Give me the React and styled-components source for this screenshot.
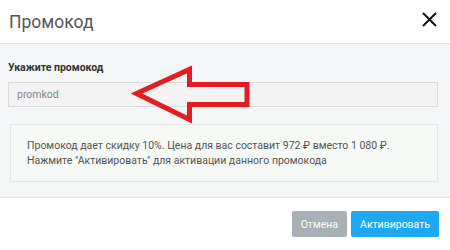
import React from 'react';
import styled, { createGlobalStyle } from 'styled-components';

const GlobalStyle = createGlobalStyle`
  body {
    margin: 0;
    font-family: Roboto, "Liberation Sans", sans-serif;
    background: #fff;
  }
`;

const App = () => {
  return (
    <>
      <GlobalStyle />
      <Modal>
        <Header>
          <Title>Промокод</Title>
          <CloseButton aria-label="close">
            <svg width="15" height="15" viewBox="0 0 15 15">
              <path d="M1 1 L14 14 M14 1 L1 14" stroke="#111" strokeWidth="2" fill="none" />
            </svg>
          </CloseButton>
        </Header>
        <Body>
          <Label>Укажите промокод</Label>
          <Input defaultValue="promkod" readOnly />
          <InfoBox>
            Промокод дает скидку 10%. Цена для вас составит 972 ₽ вместо 1 080 ₽.
            <br />
            Нажмите "Активировать" для активации данного промокода
          </InfoBox>
        </Body>
        <Footer>
          <Button $variant="cancel">Отмена</Button>
          <Button>Активировать</Button>
        </Footer>
        <Arrow width="450" height="250" viewBox="0 0 450 250">
          <polygon
            points="136.5,93.5 189.5,69.5 189.5,84.5 247,84.5 247,104.5 189.5,104.5 189.5,119.5"
            fill="none"
            stroke="#e41d25"
            strokeWidth="5"
            strokeLinejoin="miter"
          />
        </Arrow>
      </Modal>
    </>
  );
};

const Modal = styled.div`
  position: relative;
  width: 450px;
  height: 250px;
  display: flex;
  flex-direction: column;
  background: #fff;
  overflow: hidden;
`;

const Header = styled.div`
  height: 44px;
  display: flex;
  align-items: center;
  justify-content: space-between;
  padding: 0 13px 0 9px;
  border-bottom: 1px solid #e4e4e4;
  box-sizing: border-box;
`;

const Title = styled.h2`
  margin: 0;
  font-size: 17.5px;
  font-weight: 400;
  color: #555;
`;

const CloseButton = styled.button`
  border: none;
  background: none;
  padding: 0;
  margin-top: -5px;
  display: flex;
  cursor: pointer;
`;

const Body = styled.div`
  background: #f5f6f8;
  padding: 17px 12px 15px 8px;
  border-bottom: 1px solid #e4e4e4;
  display: flex;
  flex-direction: column;
`;

const Label = styled.label`
  font-size: 10.5px;
  line-height: 13px;
  font-weight: 700;
  color: #333;
  margin-bottom: 8px;
`;

const Input = styled.input`
  height: 25px;
  box-sizing: border-box;
  border: 1px solid #dcdcdc;
  background: #f3f3f3;
  padding: 0 8px;
  font-family: Roboto, "Liberation Sans", sans-serif;
  font-size: 10.5px;
  color: #888;
  outline: none;
`;

const InfoBox = styled.div`
  margin: 17px 0 0 2px;
  padding: 14px 16px 13px;
  background: #f6f9f6;
  border: 1px solid #e5e9e5;
  font-size: 10.5px;
  line-height: 14.5px;
  color: #555;
`;

const Footer = styled.div`
  display: flex;
  justify-content: flex-end;
  gap: 4px;
  padding: 13px 11px 0;
`;

const Button = styled.button`
  height: 26px;
  padding: 0 9px;
  border: none;
  border-radius: 2px;
  font-family: Roboto, "Liberation Sans", sans-serif;
  font-size: 10.5px;
  color: #fff;
  background: ${p => (p.$variant === 'cancel' ? '#a8b0b6' : '#1da9f1')};
  cursor: pointer;
`;

const Arrow = styled.svg`
  position: absolute;
  left: 0;
  top: 0;
  pointer-events: none;
`;

export default App;
